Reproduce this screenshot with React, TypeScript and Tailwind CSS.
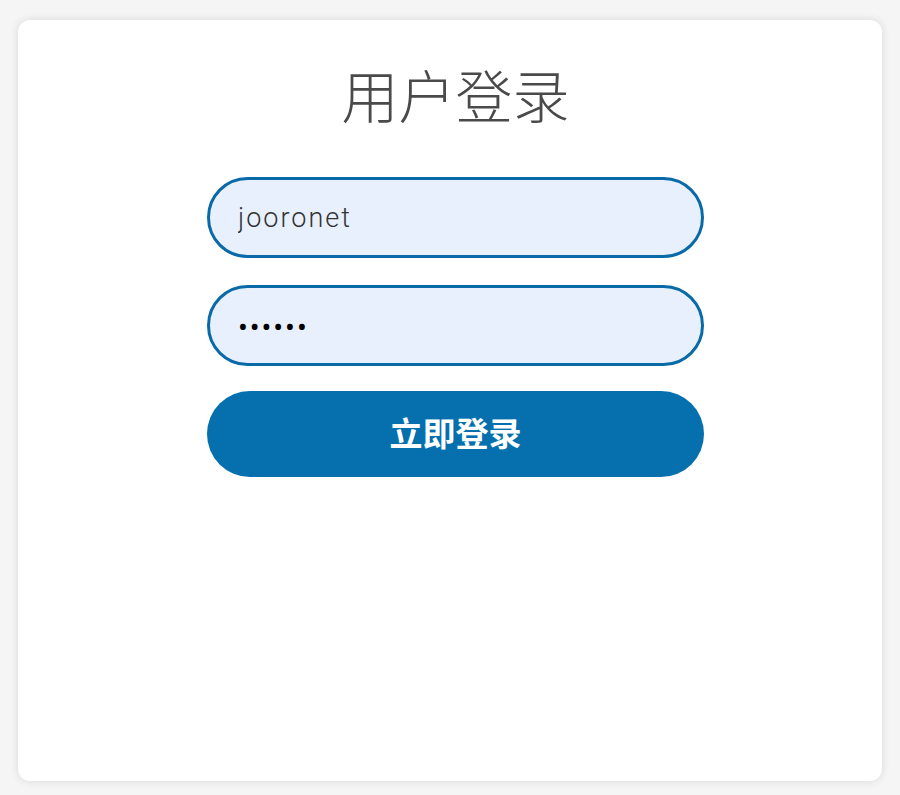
export default function App() {
  return (
    <div className="min-h-screen bg-[#f5f5f5] px-[18px] pt-[20px] pb-[14px] font-['Noto_Sans','Noto_Sans_CJK_SC',sans-serif]">
      <div className="flex h-[761px] flex-col items-center rounded-xl bg-white pl-[11px] shadow-[0_0_8px_rgba(0,0,0,0.12)]">
        <h1 className="mt-[41px] text-[57px] leading-[70px] font-light text-[#4a4a4a]">用户登录</h1>
        <form className="mt-[46px] flex w-[497px] flex-col gap-[27px]">
          <input
            defaultValue="jooronet"
            className="h-[81px] rounded-full border-[3px] border-[#0a6aa8] bg-[#e8f0fe] px-[28px] font-['Roboto',sans-serif] text-[27px] font-light tracking-[2px] text-[#333] outline-none"
          />
          <input
            type="password"
            defaultValue="123456"
            className="h-[81px] rounded-full border-[3px] border-[#0a6aa8] bg-[#e8f0fe] px-[28px] text-[26px] tracking-[2px] text-black outline-none"
          />
          <button
            type="button"
            className="-mt-[2px] h-[86px] rounded-full bg-[#066fae] text-[33px] font-bold text-white"
          >
            立即登录
          </button>
        </form>
      </div>
    </div>
  );
}
